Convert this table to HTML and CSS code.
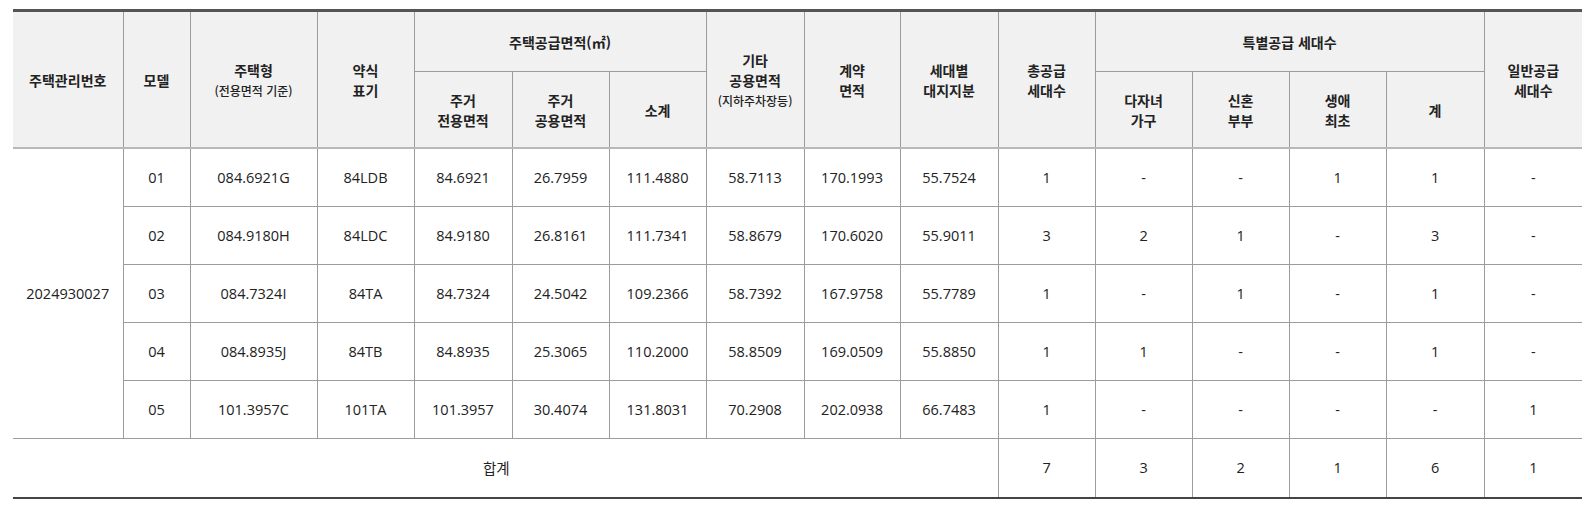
FILE: index.html
```html
<!DOCTYPE html>
<html lang="ko">
<head>
<meta charset="utf-8">
<title>공급세대 현황</title>
<link rel="stylesheet" href="styles.css">
</head>
<body>
<div class="page">
<table class="supply">
  <colgroup>
    <col class="c110"><col class="c67"><col class="c127"><col class="c97">
    <col class="c98"><col class="c97"><col class="c97"><col class="c98">
    <col class="c96"><col class="c98"><col class="c97"><col class="c97">
    <col class="c97"><col class="c97"><col class="c98"><col class="c98">
  </colgroup>
  <thead>
    <tr class="h1">
      <th rowspan="2" class="first">주택관리번호</th>
      <th rowspan="2">모델</th>
      <th rowspan="2">주택형<br><span class="sub">(전용면적 기준)</span></th>
      <th rowspan="2">약식<br>표기</th>
      <th colspan="3">주택공급면적(㎡)</th>
      <th rowspan="2">기타<br>공용면적<br><span class="sub">(지하주차장등)</span></th>
      <th rowspan="2">계약<br>면적</th>
      <th rowspan="2">세대별<br>대지지분</th>
      <th rowspan="2">총공급<br>세대수</th>
      <th colspan="4">특별공급 세대수</th>
      <th rowspan="2" class="last">일반공급<br>세대수</th>
    </tr>
    <tr class="h2">
      <th>주거<br>전용면적</th>
      <th>주거<br>공용면적</th>
      <th>소계</th>
      <th>다자녀<br>가구</th>
      <th>신혼<br>부부</th>
      <th>생애<br>최초</th>
      <th>계</th>
    </tr>
  </thead>
  <tbody>
    <tr>
      <td rowspan="5" class="first">2024930027</td>
      <td>01</td><td>084.6921G</td><td>84LDB</td><td>84.6921</td><td>26.7959</td><td>111.4880</td><td>58.7113</td><td>170.1993</td><td>55.7524</td><td>1</td><td>-</td><td>-</td><td>1</td><td>1</td><td class="last">-</td>
    </tr>
    <tr>
      <td>02</td><td>084.9180H</td><td>84LDC</td><td>84.9180</td><td>26.8161</td><td>111.7341</td><td>58.8679</td><td>170.6020</td><td>55.9011</td><td>3</td><td>2</td><td>1</td><td>-</td><td>3</td><td class="last">-</td>
    </tr>
    <tr>
      <td>03</td><td>084.7324I</td><td>84TA</td><td>84.7324</td><td>24.5042</td><td>109.2366</td><td>58.7392</td><td>167.9758</td><td>55.7789</td><td>1</td><td>-</td><td>1</td><td>-</td><td>1</td><td class="last">-</td>
    </tr>
    <tr>
      <td>04</td><td>084.8935J</td><td>84TB</td><td>84.8935</td><td>25.3065</td><td>110.2000</td><td>58.8509</td><td>169.0509</td><td>55.8850</td><td>1</td><td>1</td><td>-</td><td>-</td><td>1</td><td class="last">-</td>
    </tr>
    <tr>
      <td>05</td><td>101.3957C</td><td>101TA</td><td>101.3957</td><td>30.4074</td><td>131.8031</td><td>70.2908</td><td>202.0938</td><td>66.7483</td><td>1</td><td>-</td><td>-</td><td>-</td><td>-</td><td class="last">1</td>
    </tr>
  </tbody>
  <tfoot>
    <tr>
      <td colspan="10" class="first total-label">합계</td>
      <td>7</td><td>3</td><td>2</td><td>1</td><td>6</td><td class="last">1</td>
    </tr>
  </tfoot>
</table>
</div>
</body>
</html>
```
FILE: styles.css
```css
html, body {
  margin: 0;
  padding: 0;
  background: #ffffff;
}
.page {
  padding: 9px 12px 0 13px;
}
.supply {
  width: 1569px;
  border-collapse: collapse;
  table-layout: fixed;
  font-family: "Open Sans", "Noto Sans CJK KR", sans-serif;
  color: #222222;
  border-top: 3px solid #555555;
  border-bottom: 2px solid #444444;
}
.c110 { width: 110px; }
.c67 { width: 67px; }
.c127 { width: 127px; }
.c96 { width: 96px; }
.c97 { width: 97px; }
.c98 { width: 98px; }

.supply th,
.supply td {
  border: 1px solid #9c9c9c;
  text-align: center;
  vertical-align: middle;
  padding: 0;
}
.supply th {
  background: #f1f1f1;
  font-family: "Noto Sans CJK KR", sans-serif;
  font-weight: 700;
  font-size: 14px;
  line-height: 20px;
  color: #222222;
}
.supply .sub {
  font-size: 12px;
  font-weight: 500;
  line-height: 18px;
}
.supply .h1 th { height: 59px; }
.supply .h2 th { height: 75px; }
.supply thead tr:last-child th,
.supply thead .h1 th[rowspan] {
  border-bottom: 2px solid #b8b8b8;
}
.supply td {
  font-size: 14.5px;
  height: 57px;
  line-height: 20px;
}
.supply tfoot td {
  height: 58px;
  border-top: 1px solid #8c8c8c;
}
.supply tfoot td.total-label {
  font-family: "Noto Sans CJK KR", sans-serif;
  font-size: 14.5px;
  padding-right: 18px;
}
.supply .first { border-left: none; }
.supply .last { border-right: none; }
```
